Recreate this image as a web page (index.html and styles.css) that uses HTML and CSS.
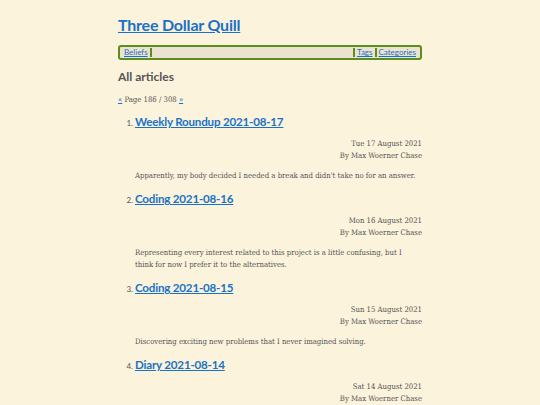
FILE: index.html
```html
<!DOCTYPE html>
<html>
<head>
<meta charset="utf-8">
<link rel="stylesheet" href="styles.css">
</head>
<body>
<div class="page">
  <h1 class="site-title"><a href="#">Three Dollar Quill</a></h1>
  <nav class="nav">
    <a href="#">Beliefs</a>
    <span class="sep"></span>
    <span class="spacer"></span>
    <span class="sep"></span>
    <a href="#">Tags</a>
    <span class="sep"></span>
    <a href="#">Categories</a>
  </nav>
  <h2 class="section-title">All articles</h2>
  <p class="pager"><a href="#">«</a> Page 186 / 308 <a href="#">»</a></p>
  <ol class="articles">
    <li class="article">
      <h3 class="article-title"><a href="#">Weekly Roundup 2021-08-17</a></h3>
      <div class="meta"><div>Tue 17 August 2021</div><div>By Max Woerner Chase</div></div>
      <p class="summary">Apparently, my body decided I needed a break and didn't take no for an answer.</p>
    </li>
    <li class="article">
      <h3 class="article-title"><a href="#">Coding 2021-08-16</a></h3>
      <div class="meta"><div>Mon 16 August 2021</div><div>By Max Woerner Chase</div></div>
      <p class="summary">Representing every interest related to this project is a little confusing, but I think for now I prefer it to the alternatives.</p>
    </li>
    <li class="article">
      <h3 class="article-title"><a href="#">Coding 2021-08-15</a></h3>
      <div class="meta"><div>Sun 15 August 2021</div><div>By Max Woerner Chase</div></div>
      <p class="summary">Discovering exciting new problems that I never imagined solving.</p>
    </li>
    <li class="article">
      <h3 class="article-title"><a href="#">Diary 2021-08-14</a></h3>
      <div class="meta"><div>Sat 14 August 2021</div><div>By Max Woerner Chase</div></div>
      <p class="summary">Not much happened today.</p>
    </li>
  </ol>
</div>
</body>
</html>
```
FILE: styles.css
```css
html, body {
  margin: 0;
  padding: 0;
  background: #fcf3dc;
}
body {
  font-family: "DejaVu Serif Condensed", "DejaVu Serif", serif;
  color: #555;
  font-size: 7.7px;
}
.page {
  width: 304px;
  margin: 0 auto;
  padding-top: 14px;
}
a {
  color: #1a72c6;
}
.site-title {
  font-family: Lato, "Open Sans", sans-serif;
  font-size: 16px;
  letter-spacing: -0.2px;
  font-weight: 700;
  line-height: 22px;
  margin: 0 0 9px 0;
}
.nav {
  display: flex;
  align-items: stretch;
  background: #ebe3cf;
  border: 2px solid #5c8e1d;
  border-radius: 3px;
  height: 11px;
  padding: 0 2px;
  font-family: Lato, sans-serif;
  font-size: 8px;
  line-height: 11px;
}
.nav a {
  padding: 0 2px;
}
.sep {
  width: 2px;
  background: #5c8e1d;
  margin: 1px 0;
}
.spacer {
  flex: 1;
}
.section-title {
  font-family: Lato, sans-serif;
  font-size: 12px;
  font-weight: 700;
  color: #555;
  line-height: 16px;
  margin: 9px 0 0 0;
}
.pager {
  line-height: 12px;
  margin: 9px 0 0 0;
}
.articles {
  margin: 8px 0 0 0;
  padding-left: 17px;
}
.article {
  margin-bottom: 9px;
}
.article::marker {
  font-family: Lato, sans-serif;
  font-size: 8px;
}
.article-title {
  font-family: Lato, sans-serif;
  font-size: 11.6px;
  letter-spacing: -0.2px;
  font-weight: 700;
  line-height: 16px;
  margin: 0;
}
.meta {
  text-align: right;
  line-height: 12px;
  margin-top: 8px;
}
.summary {
  line-height: 12px;
  margin: 8px 0 0 0;
  padding-right: 2px;
}
```
